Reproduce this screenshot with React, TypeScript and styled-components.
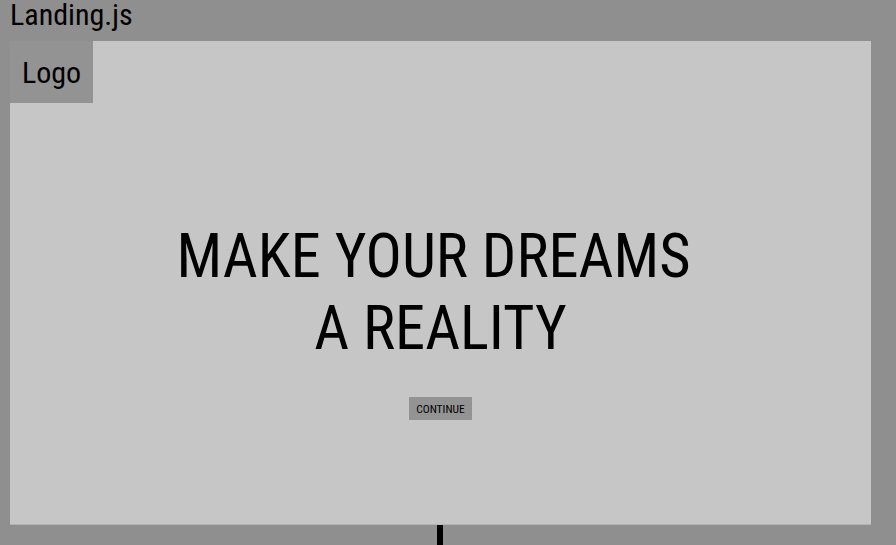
import React from "react";
import styled, { createGlobalStyle } from "styled-components";

const Global = createGlobalStyle`
  html, body { margin: 0; padding: 0; }
  body {
    background: #8f8f8f;
    font-family: Roboto, "Noto Sans", sans-serif;
    font-stretch: condensed;
    color: #000;
    height: 545px;
    overflow: hidden;
  }
`;

const Page = styled.div`
  display: flex;
  flex-direction: column;
  align-items: flex-start;
  padding-left: 10px;
`;

const FileName = styled.div`
  font-size: 30px;
  line-height: 29px;
  height: 41px;
  font-stretch: condensed;
`;

const Panel = styled.section`
  width: 861px;
  height: 483px;
  background: #c6c6c6;
  border-bottom: 1px solid #b3b3b3;
  display: flex;
  flex-direction: column;
`;

const LogoBox = styled.div`
  width: 83px;
  height: 62px;
  background: #939393;
  display: flex;
  align-items: center;
  justify-content: center;
  font-size: 30px;
  font-stretch: condensed;
`;

const Hero = styled.div`
  display: flex;
  flex-direction: column;
  align-items: center;
  padding-top: 118px;
`;

const Title = styled.h1`
  margin: 0;
  font-weight: 400;
  font-size: 60.5px;
  line-height: 72px;
  text-align: center;
  font-stretch: condensed;
`;

const Button = styled.button`
  margin-top: 32px;
  border: none;
  background: #939393;
  font-family: Roboto, sans-serif;
  font-stretch: condensed;
  font-size: 11.5px;
  width: 63px;
  height: 23px;
  padding: 0;
  color: #000;
`;

const Stem = styled.div`
  width: 6px;
  height: 30px;
  background: #000;
  margin-left: 427px;
`;

export default function App() {
  return (
    <>
      <Global />
      <Page>
        <FileName>Landing.js</FileName>
        <Panel>
          <LogoBox>Logo</LogoBox>
          <Hero>
            <Title>
              MAKE YOUR DREAMS{"\u00a0"}
              <br />
              A REALITY
            </Title>
            <Button>CONTINUE</Button>
          </Hero>
        </Panel>
        <Stem />
      </Page>
    </>
  );
}
